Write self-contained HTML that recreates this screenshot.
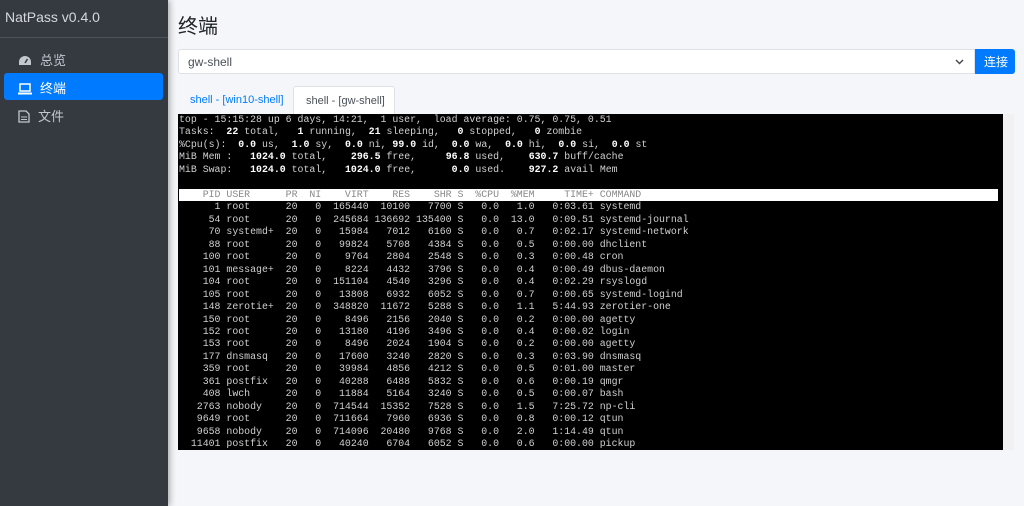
<!DOCTYPE html>
<html><head><meta charset="utf-8"><style>
*{box-sizing:border-box;margin:0;padding:0}
body{width:1024px;height:506px;overflow:hidden;background:#f4f6f9;font-family:"Liberation Sans","Noto Sans CJK SC",sans-serif;position:relative}
.side{position:absolute;left:0;top:0;width:168px;height:506px;background:#343a40;box-shadow:2px 0 6px rgba(0,0,0,.3)}
.brand{height:38px;border-bottom:1px solid #4b545c;color:#d5d8dc;font-size:14px;padding:9px 0 0 5px}
.nav{position:absolute;left:4px;width:159px;height:27px;border-radius:3px;color:#c2c7d0;font-size:13px;padding:5px 0 0 14px}
.nav svg{vertical-align:-2px;margin-right:8px}
.act{background:#007bff;color:#fff}
h1{position:absolute;left:178px;top:10px;font-size:20px;font-weight:400;color:#212529}
.sel{position:absolute;left:178px;top:49px;width:797px;height:25px;background:#fff;border:1px solid #dde1e5;border-radius:3px 0 0 3px;font-size:12px;color:#495057;padding:5px 9px}
.btn{position:absolute;left:975px;top:49px;width:40px;height:25px;background:#007bff;color:#fff;border-radius:0 3px 3px 0;font-size:12px;padding:4px 0 0 9px}
.tab1{position:absolute;left:190px;top:94px;font-size:11px;color:#007bff}
.tab2{position:absolute;left:293px;top:86px;width:102px;height:28px;background:#fff;border:1px solid #dee2e6;border-bottom:none;border-radius:3px 3px 0 0;font-size:11px;color:#495057;padding:8px 0 0 12px}
.term{position:absolute;left:178px;top:114px;width:825px;height:336px;background:#000}
.sb{position:absolute;left:1003px;top:114px;width:11px;height:336px;background:#f1f1f1}
pre{position:absolute;left:179px;top:114px;font-family:"Liberation Mono",monospace;font-size:9.9px;line-height:12.47px;color:#d0d0d0;white-space:pre}
b{color:#fff}
.hd{background:#fff;color:#888;display:inline-block;width:819px}
</style></head><body>
<div class="side">
<div class="brand">NatPass v0.4.0</div>
<div class="nav" style="top:45px"><svg width="14" height="12" viewBox="0 0 14 12"><path d="M7 1a6 6 0 0 0-6 6v3h12V7a6 6 0 0 0-6-6z" fill="#c2c7d0"/><path d="M7 8L9.5 4" stroke="#343a40" stroke-width="1.5"/></svg>总览</div>
<div class="nav act" style="top:73px"><svg width="14" height="12" viewBox="0 0 14 12"><rect x="2" y="1" width="10" height="7" fill="none" stroke="#fff" stroke-width="1.5"/><rect x="0" y="9.5" width="14" height="2" fill="#fff"/></svg>终端</div>
<div class="nav" style="top:101px"><svg width="12" height="13" viewBox="0 0 12 13"><path d="M1 1h7l3 3v8H1z" fill="none" stroke="#c2c7d0" stroke-width="1.3"/><path d="M3 7h6M3 9.5h6" stroke="#c2c7d0"/></svg>文件</div>
</div>
<h1>终端</h1>
<div class="sel">gw-shell<svg style="position:absolute;right:10px;top:9px" width="9" height="6" viewBox="0 0 9 6"><path d="M1 1l3.5 3.5L8 1" fill="none" stroke="#444" stroke-width="1.4"/></svg></div>
<div class="btn">连接</div>
<div class="tab1">shell - [win10-shell]</div>
<div class="tab2">shell - [gw-shell]</div>
<div class="term"></div><div class="sb"></div>
<pre>top - 15:15:28 up 6 days, 14:21,  1 user,  load average: 0.75, 0.75, 0.51
Tasks: <b> 22</b> total, <b>  1</b> running, <b> 21</b> sleeping, <b>  0</b> stopped, <b>  0</b> zombie
%Cpu(s): <b> 0.0</b> us, <b> 1.0</b> sy, <b> 0.0</b> ni, <b>99.0</b> id, <b> 0.0</b> wa, <b> 0.0</b> hi, <b> 0.0</b> si, <b> 0.0</b> st
MiB Mem : <b>  1024.0</b> total, <b>   296.5</b> free, <b>    96.8</b> used, <b>   630.7</b> buff/cache
MiB Swap: <b>  1024.0</b> total, <b>  1024.0</b> free, <b>     0.0</b> used. <b>   927.2</b> avail Mem

<span class="hd">    PID USER      PR  NI    VIRT    RES    SHR S  %CPU  %MEM     TIME+ COMMAND</span>
      1 root      20   0  165440  10100   7700 S   0.0   1.0   0:03.61 systemd
     54 root      20   0  245684 136692 135400 S   0.0  13.0   0:09.51 systemd-journal
     70 systemd+  20   0   15984   7012   6160 S   0.0   0.7   0:02.17 systemd-network
     88 root      20   0   99824   5708   4384 S   0.0   0.5   0:00.00 dhclient
    100 root      20   0    9764   2804   2548 S   0.0   0.3   0:00.48 cron
    101 message+  20   0    8224   4432   3796 S   0.0   0.4   0:00.49 dbus-daemon
    104 root      20   0  151104   4540   3296 S   0.0   0.4   0:02.29 rsyslogd
    105 root      20   0   13808   6932   6052 S   0.0   0.7   0:00.65 systemd-logind
    148 zerotie+  20   0  348820  11672   5288 S   0.0   1.1   5:44.93 zerotier-one
    150 root      20   0    8496   2156   2040 S   0.0   0.2   0:00.00 agetty
    152 root      20   0   13180   4196   3496 S   0.0   0.4   0:00.02 login
    153 root      20   0    8496   2024   1904 S   0.0   0.2   0:00.00 agetty
    177 dnsmasq   20   0   17600   3240   2820 S   0.0   0.3   0:03.90 dnsmasq
    359 root      20   0   39984   4856   4212 S   0.0   0.5   0:01.00 master
    361 postfix   20   0   40288   6488   5832 S   0.0   0.6   0:00.19 qmgr
    408 lwch      20   0   11884   5164   3240 S   0.0   0.5   0:00.07 bash
   2763 nobody    20   0  714544  15352   7528 S   0.0   1.5   7:25.72 np-cli
   9649 root      20   0  711664   7960   6936 S   0.0   0.8   0:00.12 qtun
   9658 nobody    20   0  714096  20480   9768 S   0.0   2.0   1:14.49 qtun
  11401 postfix   20   0   40240   6704   6052 S   0.0   0.6   0:00.00 pickup</pre>
</body></html>
